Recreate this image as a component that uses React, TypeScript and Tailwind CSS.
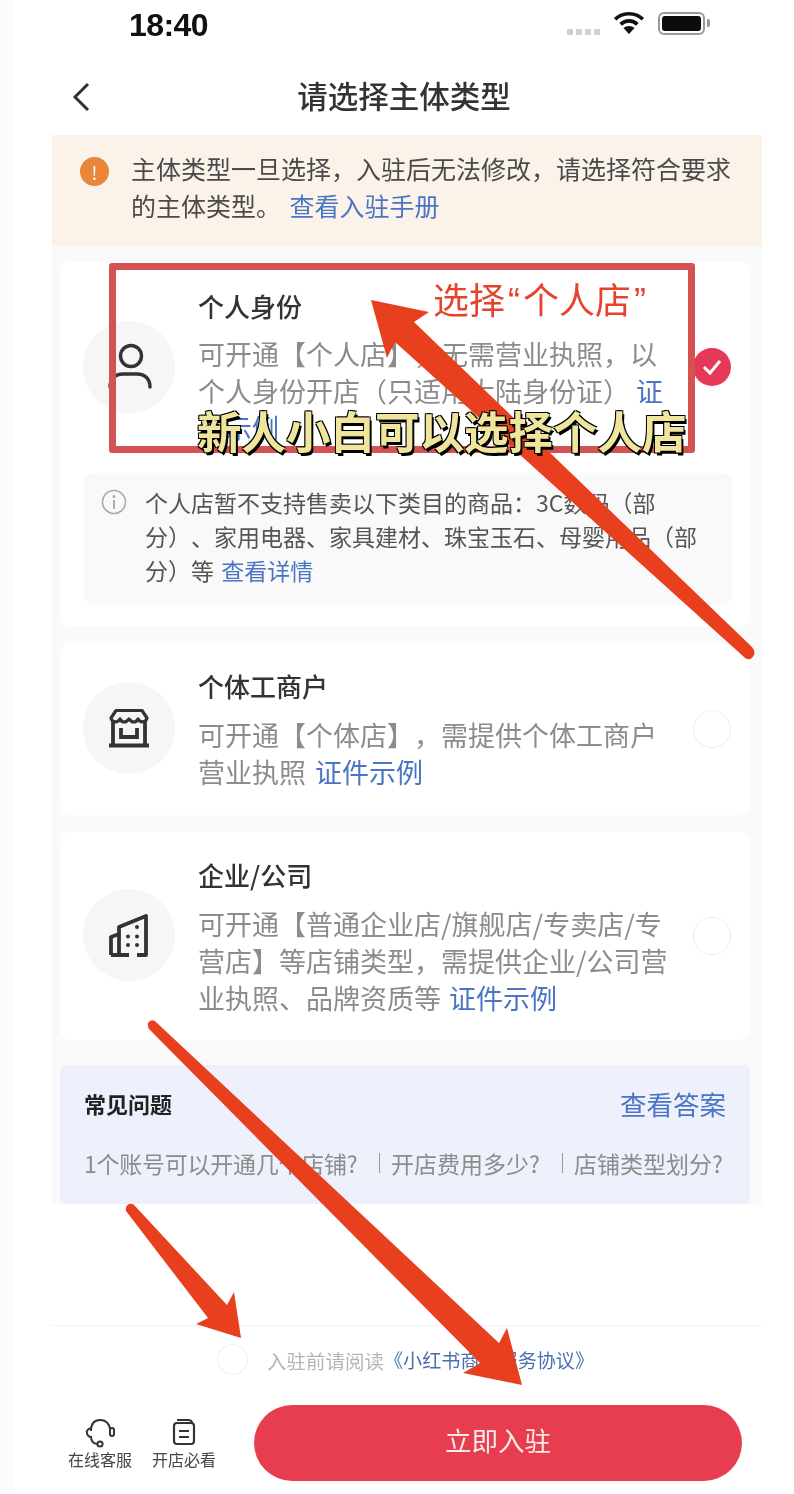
import React from "react";

const font = { fontFamily: '"Noto Sans CJK SC", "Noto Sans", sans-serif' };

function IconCircle({ children, className = "" }: { children: React.ReactNode; className?: string }) {
  return (
    <div className={"w-[92px] h-[92px] rounded-full bg-[#f6f6f6] flex items-center justify-center shrink-0 " + className}>
      {children}
    </div>
  );
}

export default function App() {
  return (
    <div style={font} className="relative w-[794px] h-[1494px] overflow-hidden bg-white [text-spacing-trim:space-all] blur-[0.4px]">
      <div className="absolute left-0 top-0 bottom-0 w-[14px] bg-[#fcfcfc]" />
      <div className="relative ml-[52px] w-[710px] h-full flex flex-col">
        {/* status bar */}
        <div className="h-[46px] flex items-center justify-between pl-[77px] pr-[57px]">
          <span className="mt-[3px] text-[32px] font-bold tracking-[-0.6px] text-[#111] [font-family:'Liberation_Sans',sans-serif] leading-none">18:40</span>
          <div className="flex items-center">
            <div className="flex gap-[3px] mr-[13px] mt-[18px]">
              <span className="w-[6px] h-[6px] bg-[#cfcfcf] rounded-[1px]" />
              <span className="w-[6px] h-[6px] bg-[#cfcfcf] rounded-[1px]" />
              <span className="w-[6px] h-[6px] bg-[#cfcfcf] rounded-[1px]" />
              <span className="w-[6px] h-[6px] bg-[#cfcfcf] rounded-[1px]" />
            </div>
            <svg width="32" height="24" viewBox="0 0 34 26" className="mr-[13px]">
              <path d="M2 9 C10 1 24 1 32 9" fill="none" stroke="#111" strokeWidth="4" />
              <path d="M8 14.5 C13 9.5 21 9.5 26 14.5" fill="none" stroke="#111" strokeWidth="4" />
              <path d="M17 25 L11 18.5 C14 15.5 20 15.5 23 18.5 Z" fill="#111" />
            </svg>
            <div className="relative w-[47px] h-[23px] rounded-[6px] border-2 border-[#9a9a9a] p-[2px]">
              <div className="w-full h-full bg-[#0c0c0c] rounded-[3px]" />
              <div className="absolute right-[-7px] top-[5px] w-[3px] h-[8px] bg-[#9a9a9a] rounded-r-[2px]" />
            </div>
          </div>
        </div>

        {/* nav */}
        <div className="relative h-[89px] flex items-center justify-center">
          <svg width="18" height="30" viewBox="0 0 18 30" className="absolute left-[20px] top-[36px]">
            <path d="M16 2 L3 15 L16 28" fill="none" stroke="#333" strokeWidth="3" />
          </svg>
          <span className="text-[30.5px] font-medium text-[#333] leading-none mt-[10px] mr-[6px]">请选择主体类型</span>
        </div>

        {/* notice */}
        <div className="h-[111px] bg-[#fbf3ea] flex pl-[28px] pr-[28px] pt-[15px]">
          <div className="w-[29px] h-[29px] mt-[7px] rounded-full bg-[#e9863a] flex items-center justify-center text-white text-[18px] leading-none shrink-0">!</div>
          <p className="ml-[22px] text-[25px] leading-[37px] text-[#4a4a4a] w-[610px]">
            主体类型一旦选择，入驻后无法修改，请选择符合要求的主体类型。 <span className="ml-[3px] text-[#4a74c4]">查看入驻手册</span>
          </p>
        </div>

        {/* body */}
        <div className="bg-[#fafafa] pl-[8px] pr-[12px] pt-[16px] flex flex-col gap-[17px] h-[958px]">
          <div className="bg-white rounded-[10px] h-[364px] pl-[23px] pt-[26px]">
            <div className="flex">
              <IconCircle className="mt-[33px]">
                <svg width="44" height="48" viewBox="0 0 44 48" className="ml-[2px]">
                  <circle cx="23" cy="13" r="10.5" fill="none" stroke="#333" strokeWidth="3.4" />
                  <path d="M2 44 C2 36 7 31 15 31 H29 C37 31 42 36 42 44" fill="none" stroke="#333" strokeWidth="3.4" strokeLinecap="round" />
                </svg>
              </IconCircle>
              <div className="ml-[23px] w-[495px]">
                <div className="text-[26px] font-medium text-[#333] leading-[36px]">个人身份</div>
                <p className="mt-[11px] text-[27px] leading-[37px] text-[#8c8c8c] w-[470px]">
                  可开通【个人店】，无需营业执照，以个人身份开店（只适用大陆身份证） <span className="text-[#4a74c4]">证件示例</span>
                </p>
              </div>
              <div className="mt-[60px] w-[38px] h-[38px] rounded-full bg-[#e6395a] flex items-center justify-center shrink-0">
                <svg width="22" height="18" viewBox="0 0 22 18">
                  <path d="M3 9 L9 15 L19 3" fill="none" stroke="#fff" strokeWidth="3" />
                </svg>
              </div>
            </div>
            <div className="mt-[27px] h-[132px] w-[648px] ml-[1px] rounded-[10px] bg-[#f9f9f9] flex pl-[17px] pt-[12px]">
              <svg width="26" height="26" viewBox="0 0 26 26" className="mt-[4px] shrink-0">
                <circle cx="13" cy="13" r="11.5" fill="none" stroke="#aaa" strokeWidth="1.6" />
                <circle cx="13" cy="7.5" r="1.5" fill="#aaa" />
                <path d="M13 11 V20" stroke="#aaa" strokeWidth="2" />
              </svg>
              <p className="ml-[18px] text-[23px] leading-[34px] text-[#555] w-[560px]">
                个人店暂不支持售卖以下类目的商品：3C数码（部分）、家用电器、家具建材、珠宝玉石、母婴用品（部分）等 <span className="ml-[2px] text-[#4a74c4]">查看详情</span>
              </p>
            </div>
          </div>

          <div className="bg-white rounded-[10px] h-[172px] pl-[23px] pt-[25px] flex">
            <IconCircle className="mt-[14px]">
              <svg width="40" height="40" viewBox="0 0 40 40">
                <path d="M4 14 V37 M36 14 V37" fill="none" stroke="#333" strokeWidth="3.8" />
                <path d="M7 2.5 H33 L38 10 C37 15 31 15 29 11 C27 15 23 15 20 11 C17 15 13 15 11 11 C9 15 3 15 2 10 Z" fill="none" stroke="#333" strokeWidth="3.2" strokeLinejoin="round" />
                <path d="M12 20 V29 H28 V20" fill="none" stroke="#333" strokeWidth="3.8" />
                <path d="M0 37.5 H40" stroke="#333" strokeWidth="3.8" />
              </svg>
            </IconCircle>
            <div className="ml-[23px] w-[495px]">
              <div className="text-[26px] font-medium text-[#333] leading-[36px]">个体工商户</div>
              <p className="mt-[12px] text-[27px] leading-[37px] text-[#8c8c8c] w-[470px]">
                可开通【个体店】，需提供个体工商户营业执照 <span className="ml-[3px] text-[#4a74c4]">证件示例</span>
              </p>
            </div>
            <div className="w-[38px] h-[38px] mt-[42px] rounded-full border-[1.5px] border-[#eeeeee] bg-white shrink-0" />
          </div>

          <div className="bg-white rounded-[10px] h-[208px] pl-[23px] pt-[25px] flex">
            <IconCircle className="mt-[32px]">
              <svg width="40" height="44" viewBox="0 0 40 44" className="mt-[2px]">
                <path d="M2 41 V23 L10 20 M10 41 V13 L37 2 V41 H28 M20 41 H2" fill="none" stroke="#333" strokeWidth="3.8" strokeLinejoin="round" />
                <g fill="#333">
                  <circle cx="28" cy="13" r="2" />
                  <circle cx="19" cy="22.5" r="2" />
                  <circle cx="28" cy="22.5" r="2" />
                  <circle cx="19" cy="31" r="2" />
                  <circle cx="28" cy="31" r="2" />
                </g>
              </svg>
            </IconCircle>
            <div className="ml-[23px] w-[495px]">
              <div className="text-[26px] font-medium text-[#333] leading-[36px]">企业/公司</div>
              <p className="mt-[12px] text-[27px] leading-[37px] text-[#8c8c8c] w-[470px]">
                可开通【普通企业店/旗舰店/专卖店/专营店】等店铺类型，需提供企业/公司营业执照、品牌资质等 <span className="ml-[2px] text-[#4a74c4]">证件示例</span>
              </p>
            </div>
            <div className="w-[38px] h-[38px] mt-[60px] rounded-full border-[1.5px] border-[#eeeeee] bg-white shrink-0" />
          </div>

          <div className="mt-[8px] bg-[#eef1fb] rounded-[6px] h-[139px] px-[24px] pt-[19px]">
            <div className="flex items-center justify-between">
              <span className="text-[22px] font-bold text-[#222]">常见问题</span>
              <span className="text-[26.5px] text-[#4a74c4]">查看答案</span>
            </div>
            <div className="mt-[22px] flex items-center text-[23px] text-[#8c8c8c] whitespace-nowrap">
              <span className="w-[273px] shrink-0 tracking-[-0.25px]">1个账号可以开通几个店铺?</span>
              <span className="w-px h-[20px] bg-[#999] ml-[22px] mr-[11px] shrink-0" />
              <span className="w-[149px] shrink-0">开店费用多少?</span>
              <span className="w-px h-[20px] bg-[#999] ml-[22px] mr-[11px] shrink-0" />
              <span className="shrink-0">店铺类型划分?</span>
            </div>
          </div>
        </div>
      </div>

      {/* footer over page bottom */}
      <div className="absolute left-[52px] top-[1325px] w-[710px] h-[169px] bg-white border-t border-[#f2f2f2]">
        <div className="flex items-center h-[66px] pl-[165px]">
          <div className="w-[31px] h-[31px] rounded-full border-[1.5px] border-[#eeeeee] bg-white shrink-0" />
          <span className="ml-[19px] mt-[3px] text-[19.5px] text-[#b5b5b5]">入驻前请阅读</span>
          <span className="mt-[3px] text-[19.1px] text-[#4a6fb0]">《小红书商家服务协议》</span>
        </div>
        <div className="mt-[13px] flex items-start pl-[16px]">
          <div className="flex flex-col items-center w-[64px] pt-[13px]">
            <svg width="30" height="30" viewBox="0 0 30 30">
              <path d="M6 13 C6 5 10 2 15 2 C20 2 24 5 25 11" fill="none" stroke="#333" strokeWidth="2" />
              <rect x="25" y="10" width="4" height="8" rx="2" fill="none" stroke="#333" strokeWidth="2" />
              <path d="M6 10 C3 11 1 13 2 15 C2 17 4 19 6 19 C6 22 8 26 12 26" fill="none" stroke="#333" strokeWidth="2" />
              <circle cx="15" cy="26" r="2.6" fill="none" stroke="#333" strokeWidth="2" />
            </svg>
            <span className="text-[16px] leading-[22px] text-[#444] whitespace-nowrap">在线客服</span>
          </div>
          <div className="flex flex-col items-center w-[64px] ml-[20px] pt-[13px]">
            <svg width="24" height="30" viewBox="0 0 24 30">
              <rect x="2" y="5" width="20" height="21" rx="3" fill="none" stroke="#333" strokeWidth="2.2" />
              <path d="M5 2 H16 C18 2 20 3 20 5" fill="none" stroke="#333" strokeWidth="2" />
              <path d="M7 13 H17 M7 19 H17" stroke="#333" strokeWidth="2" />
            </svg>
            <span className="text-[16px] leading-[22px] text-[#444] whitespace-nowrap">开店必看</span>
          </div>
          <button className="ml-[38px] w-[488px] h-[76px] pb-[6px] rounded-full bg-[#e63e4e] text-[#fbeaea] text-[26.5px]">立即入驻</button>
        </div>
      </div>

      {/* annotations */}
      <div className="absolute left-[109px] top-[263px] w-[586px] h-[190px] rounded-[3px] border-[7px] border-[#d45252]" />
      <svg width="794" height="1494" viewBox="0 0 794 1494" className="absolute left-0 top-0">
        <path d="M371 300 L429 312 L414 322 L752 647 Q757 653 752 658 Q748 661 744 657 L395 342 L387 358 Z" fill="#e8401f" />
        <path d="M522 1385 L463 1373 L480 1363 L149 1029 Q146 1023 150 1021 Q154 1019 157 1023 L499 1343 L507 1328 Z" fill="#e8401f" />
        <path d="M241 1338 L196 1324 L208 1318 L126 1211 Q125 1206 129 1204 Q133 1203 135 1206 L227 1305 L234 1292 Z" fill="#e8401f" />
      </svg>
      <div className="absolute left-[433px] top-[276px] text-[36px] leading-[45px] text-[#e5432d] whitespace-nowrap">
        选择<span className="mx-[3px] [font-family:'Liberation_Sans',sans-serif]">“</span>个人店<span className="ml-[3px] [font-family:'Liberation_Sans',sans-serif]">”</span>
      </div>
      <div className="absolute left-[197px] top-[402px] text-[44.5px] leading-[56px] font-bold text-[#f0e59c] whitespace-nowrap [text-shadow:2px_3px_0_#000,-1px_-1px_0_#000,1px_-1px_0_#000,-1px_1px_0_#000]">
        新人小白可以选择个人店
      </div>
    </div>
  );
}
